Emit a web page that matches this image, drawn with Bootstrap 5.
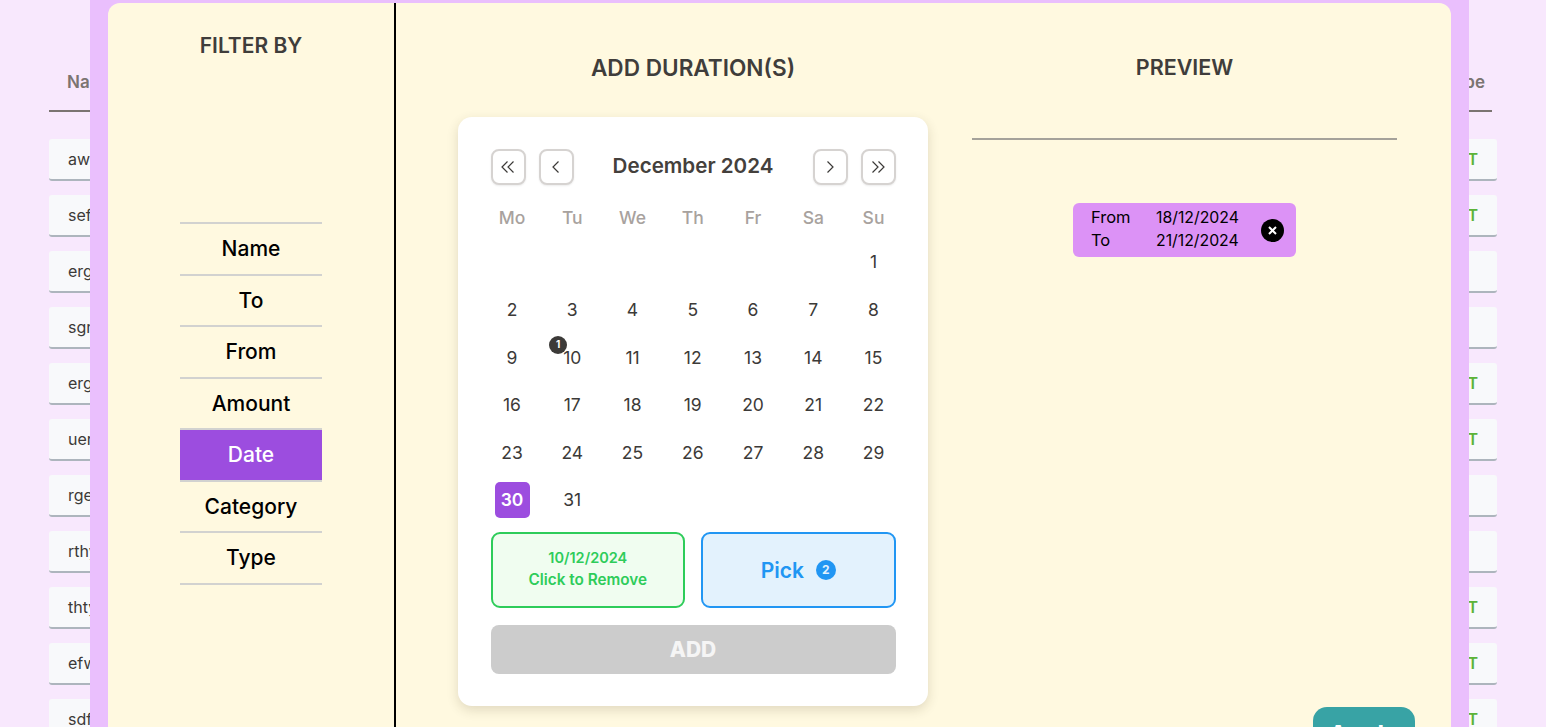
<!DOCTYPE html>
<html lang="en">
<head>
  <meta charset="UTF-8" />
  <title>Expenses - filter by date</title>
  <link rel="stylesheet" href="https://cdn.jsdelivr.net/npm/bootstrap@5.3.0/dist/css/bootstrap.min.css" />
  <style>
    html, body { height: 727px; overflow: hidden; }
    body { background: #f8e8fd; font-family: Inter, "Liberation Sans", sans-serif; color: #3c3a38; }

    .page-under { padding: 0 49px; width: 1546px; }
    .under-head { height: 112px; margin-right: 5px; padding: 70px 7px 0 18px; border-bottom: 2px solid #7b7471; color: #7b7471; font-weight: 600; font-size: 17px; }
    .under-rows { padding-top: 27px; }
    .under-row { height: 42px; margin-bottom: 14px; padding: 0 19px; background: #f8f9fb; border-bottom: 2px solid #adb5bd; border-radius: 3px; font-size: 16px; color: #3c3a38; }
    .under-type { color: #5cb338; font-weight: 600; }

    .filter-modal { position: absolute; top: 0; left: 90px; width: 1379px; height: 727px; padding: 3px 18px 0; background: #eabffd; overflow: hidden; }
    .filter-box { height: 800px; background: #fff9e0; border-radius: 12px; }
    .filter-side { width: 288px; border-right: 2px solid #000; }
    .filter-title { margin: 0; font-size: 21px; font-weight: 600; color: #3f3d3b; line-height: 30px; }
    .filter-side .filter-title { padding-top: 28px; }
    .filter-list { width: 142px; margin: 161px auto 0; border-top: 2px solid #d2d2d0; }
    .filter-item { height: 51.5px; border-bottom: 2px solid #d2d2d0; font-size: 21px; font-weight: 500; color: #000; }
    .filter-item.is-active { background: #9c4ddf; color: #fff; }

    .add-col { width: 470px; margin-left: 62px; }
    .add-col .filter-title { padding-top: 50px; font-size: 22.6px; }
    .preview-col .filter-title { padding-top: 49px; font-size: 21.5px; }
    .cal-card { margin-top: 34px; height: 589px; padding: 32px 32.5px 0; background: #fff; border-radius: 14px; box-shadow: 0 4px 12px rgba(60, 50, 20, .16); }
    .cal-nav { height: 36px; gap: 13px; }
    .cal-btn { width: 35px; height: 36px; padding: 0; background: #fff; border: 2px solid #d6d3d1; border-radius: 8px; color: #3c3a38; box-shadow: 0 1px 2px rgba(0, 0, 0, .08); }
    .cal-month { padding-bottom: 2px; font-size: 20.6px; font-weight: 600; color: #44403c; }
    .cal-grid { display: grid; grid-template-columns: repeat(7, 42px); justify-content: space-between; margin: 15px 1px 0 .5px; row-gap: 11.6px; text-align: center; }
    .cal-day { height: 36px; font-size: 17.5px; font-weight: 400; position: relative; }
    .cal-week { height: 36px; font-size: 17.5px; font-weight: 500; color: #a8a29e; margin-bottom: -4px; }
    .cal-num { padding-top: 2px; }
    .cal-day.is-picked span.cal-num { width: 35px; height: 36px; padding-top: 1px; background: #9c4ddf; color: #fff; border-radius: 5px; font-weight: 600; }
    .cal-count { position: absolute; top: -3px; left: -2px; width: 18px; height: 18px; background: #3c3a38; color: #fff; border-radius: 50%; font-size: 10px; font-weight: 700; }

    .pick-row { margin-top: 14px; gap: 16px; }
    .pick-box { flex: 1 1 0; height: 76px; border: 2px solid; border-radius: 9px; }
    .pick-from { padding-bottom: 2px; background: #f0fdf0; border-color: #2ecc5a; color: #2ecc5a; font-weight: 600; line-height: 22px; }
    .pick-date { font-size: 14.5px; }
    .pick-hint { font-size: 15.3px; }
    .pick-to { background: #e3f2fd; border-color: #2196f3; color: #2196f3; font-size: 21px; font-weight: 600; gap: 12px; }
    .pick-word { padding-top: 2px; }
    .pick-num { width: 20px; height: 20px; background: #2196f3; color: #e3f2fd; border-radius: 50%; font-size: 12px; font-weight: 700; }
    .add-btn { width: 100%; height: 49px; margin-top: 17px; padding: 1px 0 0; background: #ccc; border: 0; border-radius: 8px; color: #f5f5f5; font-size: 21px; font-weight: 800; }

    .preview-col { width: 425px; margin-left: 44px; }
    .preview-line { height: 2px; margin-top: 56px; background: #a5a29a; }
    .dur-chip { width: 223px; height: 54px; margin: 63px auto 0; padding: 0 12px 0 18px; background: #dc92f6; border-radius: 6px; color: #000; line-height: 23px; }
    .dur-text { margin-top: -2px; }
    .dur-label { width: 65px; font-size: 16.5px; }
    .dur-date { font-size: 15.8px; }
    .dur-close { width: 23px; height: 23px; margin-left: auto; padding: 0; border: 0; background: #000; border-radius: 50%; }
    .apply-btn { width: 102px; height: 55px; margin: 450px -18px 0 auto; padding: 0; background: #38a3a5; border: 0; border-radius: 14px; color: #fff; font-size: 24px; font-weight: 700; display: block; }
  </style>
</head>
<body>
  <div class="page-under">
    <div class="under-head d-flex justify-content-between"><span>Name</span><span>Type</span></div>
    <div class="under-rows" id="under-rows"></div>
  </div>

  <div class="filter-modal">
    <div class="filter-box d-flex">
      <aside class="filter-side text-center">
        <h2 class="filter-title">FILTER BY</h2>
        <div class="filter-list" id="filter-list"></div>
      </aside>

      <section class="add-col">
        <h2 class="filter-title text-center">ADD DURATION(S)</h2>
        <div class="cal-card">
          <div class="cal-nav d-flex align-items-center">
            <button class="cal-btn d-flex align-items-center justify-content-center" type="button">
              <svg width="14" height="14" viewBox="0 0 14 14" fill="none" stroke="currentColor" stroke-width="1.2"><path d="M6.5 1.5 1 7l5.5 5.5M12.5 1.5 7 7l5.5 5.5"/></svg>
            </button>
            <button class="cal-btn d-flex align-items-center justify-content-center" type="button">
              <svg width="14" height="14" viewBox="0 0 14 14" fill="none" stroke="currentColor" stroke-width="1.2"><path d="M9.5 1.5 4 7l5.5 5.5"/></svg>
            </button>
            <div class="cal-month flex-grow-1 text-center">December 2024</div>
            <button class="cal-btn d-flex align-items-center justify-content-center" type="button">
              <svg width="14" height="14" viewBox="0 0 14 14" fill="none" stroke="currentColor" stroke-width="1.2"><path d="M4.5 1.5 10 7l-5.5 5.5"/></svg>
            </button>
            <button class="cal-btn d-flex align-items-center justify-content-center" type="button">
              <svg width="14" height="14" viewBox="0 0 14 14" fill="none" stroke="currentColor" stroke-width="1.2"><path d="M1.5 1.5 7 7l-5.5 5.5M7.5 1.5 13 7l-5.5 5.5"/></svg>
            </button>
          </div>
          <div class="cal-grid" id="cal-grid"></div>
          <div class="pick-row d-flex">
            <div class="pick-box pick-from d-flex flex-column align-items-center justify-content-center">
              <div class="pick-date">10/12/2024</div>
              <div class="pick-hint">Click to Remove</div>
            </div>
            <div class="pick-box pick-to d-flex align-items-center justify-content-center">
              <span class="pick-word">Pick</span>
              <span class="pick-num d-flex align-items-center justify-content-center">2</span>
            </div>
          </div>
          <button class="add-btn" type="button">ADD</button>
        </div>
      </section>

      <section class="preview-col">
        <h2 class="filter-title text-center">PREVIEW</h2>
        <div class="preview-line"></div>
        <div class="dur-chip d-flex align-items-center">
          <div class="dur-text">
            <div class="d-flex"><span class="dur-label">From</span><span class="dur-date">18/12/2024</span></div>
            <div class="d-flex"><span class="dur-label">To</span><span class="dur-date">21/12/2024</span></div>
          </div>
          <button class="dur-close d-flex align-items-center justify-content-center" type="button">
            <svg width="9" height="9" viewBox="0 0 9 9" stroke="#fff" stroke-width="2"><path d="M1 1l7 7M8 1 1 8"/></svg>
          </button>
        </div>
        <button class="apply-btn" type="button">Apply</button>
      </section>
    </div>
  </div>

  <script src="https://cdn.jsdelivr.net/npm/bootstrap@5.3.0/dist/js/bootstrap.bundle.min.js"></script>
  <script>
    const rows = [
      ['aw', 'CREDIT'], ['sef', 'CREDIT'], ['erg', ''], ['sgr', ''], ['erg', 'CREDIT'], ['uer', 'CREDIT'],
      ['rge', ''], ['rthy', ''], ['thty', 'CREDIT'], ['efwe', 'CREDIT'], ['sdfs', 'CREDIT']
    ];
    document.getElementById('under-rows').innerHTML = rows.map(([name, type]) =>
      `<div class="under-row d-flex align-items-center justify-content-between"><span>${name}</span><span class="under-type">${type}</span></div>`
    ).join('');

    const filters = ['Name', 'To', 'From', 'Amount', 'Date', 'Category', 'Type'];
    document.getElementById('filter-list').innerHTML = filters.map((f) =>
      `<div class="filter-item d-flex align-items-center justify-content-center${f === 'Date' ? ' is-active' : ''}">${f}</div>`
    ).join('');

    let cells = ['Mo', 'Tu', 'We', 'Th', 'Fr', 'Sa', 'Su'].map((d) =>
      `<div class="cal-week d-flex align-items-center justify-content-center">${d}</div>`
    ).join('');
    for (let i = 0; i < 6; i++) cells += '<div class="cal-day"></div>';
    for (let d = 1; d <= 31; d++) {
      const badge = d === 10 ? '<span class="cal-count d-flex align-items-center justify-content-center">1</span>' : '';
      cells += `<div class="cal-day d-flex justify-content-center${d === 30 ? ' is-picked' : ''}"><span class="cal-num d-flex align-items-center justify-content-center">${d}</span>${badge}</div>`;
    }
    document.getElementById('cal-grid').innerHTML = cells;
  </script>
</body>
</html>
